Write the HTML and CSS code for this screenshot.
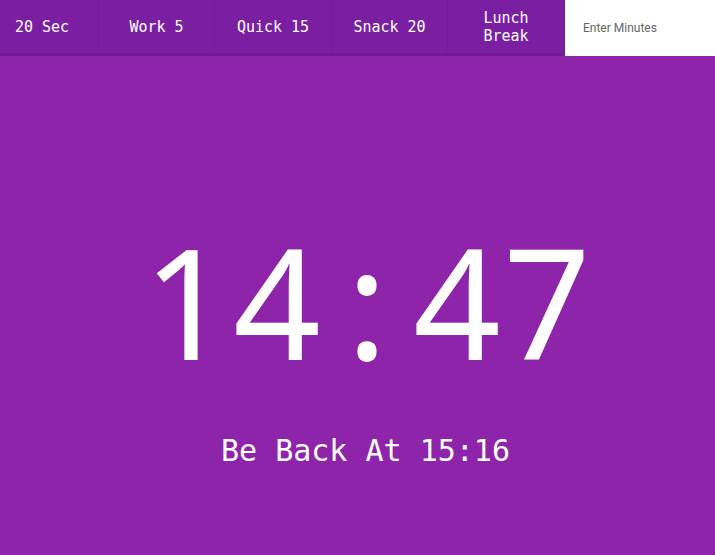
FILE: index.html
```html
<!DOCTYPE html>
<html>
<head>
<meta charset="utf-8">
<link rel="stylesheet" href="styles.css">
</head>
<body>
<header class="bar">
  <button class="btn btn-first">20 Sec</button>
  <button class="btn">Work 5</button>
  <button class="btn">Quick 15</button>
  <button class="btn">Snack 20</button>
  <button class="btn">Lunch<br>Break</button>
  <input class="minutes" type="text" placeholder="Enter Minutes">
</header>
<main class="main">
  <div class="clock"><span class="d">1</span><span class="d">4</span><span class="d">:</span><span class="d">4</span><span class="d">7</span></div>
  <div class="back">Be Back At 15:16</div>
</main>
</body>
</html>
```
FILE: styles.css
```css
html, body {
  margin: 0;
  padding: 0;
  height: 100%;
}
body {
  background: #8e24aa;
  font-family: "DejaVu Sans Mono", monospace;
  color: #fff;
  overflow: hidden;
}
.bar {
  display: grid;
  grid-template-columns: 99px 116px 117px 116px 117px 150px;
  height: 56px;
}
.btn {
  background: #7b1fa2;
  color: #fff;
  font-family: "DejaVu Sans Mono", monospace;
  font-size: 15px;
  line-height: 18px;
  border: none;
  border-right: 1px solid #711c96;
  border-bottom: 3px solid #6f1b94;
  margin: 0;
  padding: 1px 0 0 0;
  height: 56px;
}
.btn-first {
  padding-right: 14px;
}
.minutes {
  border: none;
  margin: 0;
  padding: 0 0 0 18px;
  height: 56px;
  box-sizing: border-box;
  background: #fff;
  font-family: "Roboto", "Liberation Sans", sans-serif;
  font-size: 12px;
  outline: none;
  width: 150px;
}
.minutes::placeholder {
  color: #666;
}
.main {
  display: flex;
  flex-direction: column;
  align-items: center;
  padding-top: 165px;
}
.clock {
  display: flex;
  font-family: "Noto Sans", sans-serif;
  font-size: 153px;
  line-height: 160px;
  padding-left: 19px;
}
.d {
  display: block;
  width: 90px;
  text-align: center;
}
.back {
  margin-top: 52px;
  padding-left: 16px;
  font-size: 30px;
  line-height: 36px;
}
```
